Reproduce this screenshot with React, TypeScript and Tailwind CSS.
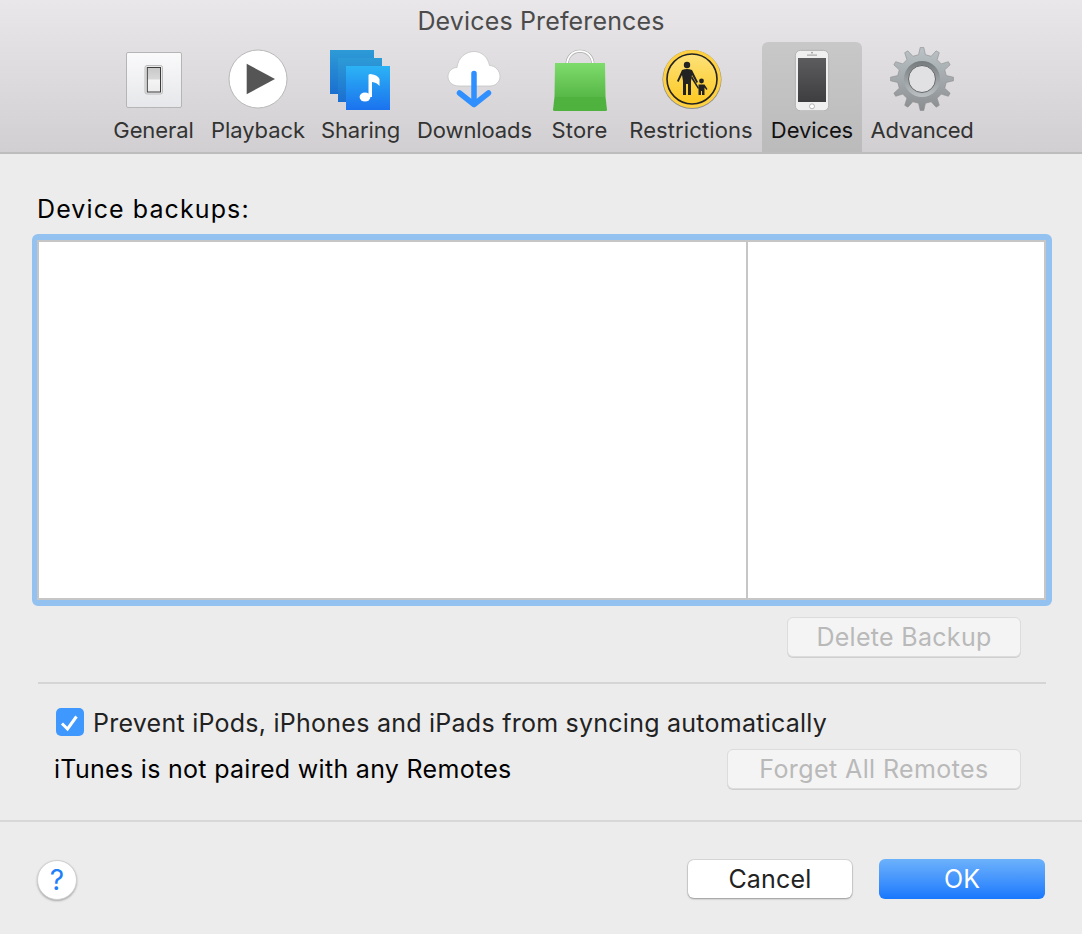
import React from "react";

const gearPath = (() => {
  const cx = 32, cy = 32, n = 12, ro = 31.5, ri = 24.5;
  const pts: string[] = [];
  for (let i = 0; i < n; i++) {
    const a = (i * 2 * Math.PI) / n - Math.PI / 2;
    const step = (2 * Math.PI) / n;
    const p = (r: number, t: number) => `${(cx + r * Math.cos(t)).toFixed(2)} ${(cy + r * Math.sin(t)).toFixed(2)}`;
    pts.push(`${i === 0 ? "M" : "L"}${p(ri, a - step * 0.27)}`);
    pts.push(`L${p(ro, a - step * 0.11)}`);
    pts.push(`L${p(ro, a + step * 0.11)}`);
    pts.push(`L${p(ri, a + step * 0.27)}`);
  }
  return pts.join(" ") + " Z";
})();

function Icon({ children }: { children: React.ReactNode }) {
  return (
    <svg width="64" height="64" viewBox="0 0 64 64" className="block">
      {children}
    </svg>
  );
}

const GeneralIcon = () => (
  <Icon>
    <defs>
      <linearGradient id="g1" x1="0" y1="0" x2="0" y2="1">
        <stop offset="0" stopColor="#fafafb" />
        <stop offset="1" stopColor="#e6e7ea" />
      </linearGradient>
      <linearGradient id="g2" x1="0" y1="0" x2="0" y2="1">
        <stop offset="0" stopColor="#c8c8c8" />
        <stop offset="0.48" stopColor="#d8d8d8" />
        <stop offset="0.5" stopColor="#f4f4f4" />
        <stop offset="1" stopColor="#ececec" />
      </linearGradient>
    </defs>
    <g transform="translate(-0.5 0)">
      <rect x="5" y="5.5" width="55" height="55" rx="1.5" fill="url(#g1)" stroke="#b5b5b7" />
      <rect x="23.5" y="18.5" width="17.5" height="28.5" rx="2" fill="#e9e9e9" stroke="#bcbcbc" />
      <rect x="25.8" y="20.5" width="13.2" height="24.5" fill="url(#g2)" stroke="#3c3c3c" strokeWidth="1" />
    </g>
  </Icon>
);

const PlaybackIcon = () => (
  <Icon>
    <circle cx="32" cy="32" r="29" fill="#fff" stroke="#b9b9b9" strokeWidth="1" />
    <path d="M20.7 16.7 L49 32 L20.7 47.3 Z" fill="#555" />
  </Icon>
);

const SharingIcon = () => (
  <Icon>
    <defs>
      <linearGradient id="s1" x1="0" y1="0" x2="0" y2="1">
        <stop offset="0" stopColor="#2d9bd6" />
        <stop offset="1" stopColor="#1b6fd0" />
      </linearGradient>
      <linearGradient id="s3" x1="0" y1="0" x2="0" y2="1">
        <stop offset="0" stopColor="#2cb3f5" />
        <stop offset="1" stopColor="#1b72ee" />
      </linearGradient>
    </defs>
    <g transform="translate(-1 0)">
      <rect x="2" y="3" width="44" height="44" fill="url(#s1)" />
      <rect x="10" y="11" width="44" height="44" fill="url(#s1)" />
      <rect x="18" y="19" width="44" height="44" fill="url(#s3)" />
      <ellipse cx="37" cy="50" rx="5.4" ry="4.6" fill="#fff" />
      <path d="M40.5 50 L40.5 28 Q41 27 42.5 27 Q50 28 51.5 32 L51.5 39 Q49 35.5 44 35 L44 50 Z" fill="#fff" />
    </g>
  </Icon>
);

const DownloadsIcon = () => (
  <Icon>
    <g transform="translate(-1 -0.5)">
      <path
        d="M17 39.5 C9 39.5 6 34 6 30 C6 25 10 21 15 21 C16 11 24 5 32 5 C40 5 46 11 47.5 19 C53 19 58 24 58 30 C58 35 54 39.5 48 39.5 Z"
        fill="#fff"
        stroke="#c4c4c4"
        strokeWidth="0.8"
      />
      <path d="M32 27 L32 57 M17.5 46.5 L32 58 L46.5 46.5" fill="none" stroke="#2f8fff" strokeWidth="5.5" strokeLinecap="round" strokeLinejoin="round" />
    </g>
  </Icon>
);

const StoreIcon = () => (
  <Icon>
    <defs>
      <linearGradient id="b1" x1="0" y1="0" x2="0" y2="1">
        <stop offset="0" stopColor="#7edc6c" />
        <stop offset="1" stopColor="#57b747" />
      </linearGradient>
    </defs>
    <g transform="translate(-0.5 0)">
      <path d="M19.5 18 C19.5 -0.5 45.5 -0.5 45.5 18" fill="none" stroke="#a9a9a9" strokeWidth="3" />
      <path d="M19.5 18 C19.5 -0.5 45.5 -0.5 45.5 18" fill="none" stroke="#fff" strokeWidth="1.8" />
      <path d="M7.5 16 L57.5 16 L58 50 L7 50 Z" fill="url(#b1)" />
      <path d="M7 50 L58 50 L59.5 62.5 Q59.5 64 58 64 L7 64 Q5.5 64 5.5 62.5 Z" fill="#4fb23e" />
    </g>
  </Icon>
);

const RestrictionsIcon = () => (
  <Icon>
    <defs>
      <linearGradient id="y1" x1="0" y1="0" x2="0" y2="1">
        <stop offset="0" stopColor="#fde179" />
        <stop offset="1" stopColor="#fdc921" />
      </linearGradient>
    </defs>
    <circle cx="33" cy="32.5" r="29.5" fill="#8c8c8c" />
    <circle cx="33" cy="32" r="29" fill="#ffd040" />
    <circle cx="33" cy="32" r="25" fill="url(#y1)" stroke="#222" strokeWidth="1.6" />
    <g transform="translate(2 1)">
      <circle cx="26" cy="17" r="3.2" fill="#222" />
      <path d="M21 22 Q26 20 31 22 L37 34 L35.5 35 L31 27 L30 33 L30 47 L27 47 L27 36 L25 36 L25 47 L22 47 L22 33 L21 27 L17.5 34 L16 33 Z" fill="#222" />
      <path d="M31 28 L38 40 L37 41 L30 30 Z" fill="#222" />
      <circle cx="40.5" cy="33" r="2.4" fill="#222" />
      <path d="M37.5 36.5 L43.5 36.5 L46.5 41 L45.5 42 L43.5 39.5 L43.5 47 L41 47 L41 43 L40 43 L40 47 L37.5 47 Z" fill="#222" />
    </g>
  </Icon>
);

const DevicesIcon = () => (
  <Icon>
    <defs>
      <linearGradient id="p1" x1="0" y1="0" x2="0" y2="1">
        <stop offset="0" stopColor="#5c5c5e" />
        <stop offset="1" stopColor="#3e3e40" />
      </linearGradient>
    </defs>
    <rect x="15.4" y="3.4" width="33.2" height="60.4" rx="5" fill="#efefef" stroke="#a9a9a9" strokeWidth="0.8" />
    <rect x="18" y="11" width="28" height="44" fill="url(#p1)" />
    <rect x="27" y="7.6" width="10" height="1" fill="#9a9a9a" />
    <circle cx="32" cy="5.7" r="0.9" fill="#9a9a9a" />
    <circle cx="32" cy="59.3" r="2.5" fill="#fff" stroke="#a5a5a5" strokeWidth="0.8" />
  </Icon>
);

const AdvancedIcon = () => (
  <Icon>
    <defs>
      <linearGradient id="a1" x1="0" y1="0" x2="0" y2="1">
        <stop offset="0" stopColor="#bac3c7" />
        <stop offset="1" stopColor="#8b8e91" />
      </linearGradient>
      <linearGradient id="a2" x1="0" y1="0" x2="0" y2="1">
        <stop offset="0" stopColor="#757a7d" />
        <stop offset="1" stopColor="#bcc1c4" />
      </linearGradient>
    </defs>
    <path d={gearPath} fill="url(#a1)" stroke="#8c8c8c" strokeWidth="0.6" strokeLinejoin="round" />
    <circle cx="32" cy="32" r="18" fill="url(#a2)" />
    <circle cx="32" cy="32" r="13.5" fill="#e1e0e2" stroke="#64686a" strokeWidth="1" />
  </Icon>
);

const tabs = [
  { label: "General", icon: <GeneralIcon />, cls: "w-[103px]" },
  { label: "Playback", icon: <PlaybackIcon />, cls: "w-[106px]" },
  { label: "Sharing", icon: <SharingIcon />, cls: "w-[99px]" },
  { label: "Downloads", icon: <DownloadsIcon />, cls: "w-[129px]" },
  { label: "Store", icon: <StoreIcon />, cls: "w-[81px] tracking-[0.2px]" },
  { label: "Restrictions", icon: <RestrictionsIcon />, cls: "w-[142px] tracking-[0.1px]" },
  { label: "Devices", icon: <DevicesIcon />, cls: "w-[100px]" },
  { label: "Advanced", icon: <AdvancedIcon />, cls: "w-[120px] tracking-[-0.3px]" },
];

export default function App() {
  return (
    <div className="w-[1082px] h-[934px] flex flex-col bg-[#ececec] overflow-hidden font-['Inter','Liberation_Sans',sans-serif] text-[25px] tracking-[0.25px] text-[#1c1c1c]">
      <header className="h-[154px] shrink-0 flex flex-col bg-gradient-to-b from-[#e9e7e9] to-[#d1cfd1] border-b-2 border-[#bdbdbd]">
        <h1 className="h-[42px] flex items-center justify-center text-[#4b4b4b] font-normal leading-none tracking-[0.15px]">Devices Preferences</h1>
        <nav className="flex justify-center pl-[2px] text-[22px] tracking-[-0.1px]">
          {tabs.map((t) => (
            <div
              key={t.label}
              className={`${t.cls} h-[110px] flex flex-col items-center rounded-t-[6px] ${t.label === "Devices" ? "bg-gradient-to-b from-[#c9c8c9] to-[#bcbbbc] text-[#111]" : "text-[#333]"}`}
            >
              <div className="mt-[5px] h-[64px]">{t.icon}</div>
              <span className="mt-[5px] leading-[28px] whitespace-nowrap">{t.label}</span>
            </div>
          ))}
        </nav>
      </header>

      <main className="flex-1 flex flex-col px-[32px] text-black">
        <div className="mt-[41px] pl-[5px] leading-[28px] tracking-[1.1px]">Device backups:</div>
        <div className="mt-[11px] h-[372px] w-[1020px] rounded-[6px] border-[6px] border-l-[5px] border-[#93c2f1]">
          <div className="h-full flex border-2 border-[#c6c6c6] bg-white">
            <div className="w-[709px] h-full border-r-2 border-[#c6c6c6]" />
            <div className="flex-1" />
          </div>
        </div>
        <div className="mt-[11px] flex justify-end pr-[29px]">
          <button className="w-[234px] h-[40px] rounded-[6px] bg-[#f4f4f4] border border-[#dcdcdc] text-[#b9b9b9] shadow-[0_1px_0_#cfcfcf] leading-none tracking-[0.3px]">
            Delete Backup
          </button>
        </div>
        <div className="mt-[25px] ml-[6px] mr-[4px] h-[2px] bg-[#d5d5d5]" />
        <div className="mt-[24px] ml-[24px] flex items-center gap-[9px] text-[#222]">
          <div className="w-[28px] h-[28px] rounded-[5px] bg-[#3f98fd]">
            <svg width="28" height="28" viewBox="0 0 28 28" className="block">
              <path d="M6 15.5 L11.5 21 L20.5 8.5" fill="none" stroke="#fff" strokeWidth="3" />
            </svg>
          </div>
          <span className="leading-[30px] h-[28px]">Prevent iPods, iPhones and iPads from syncing automatically</span>
        </div>
        <div className="mt-[13px] ml-[22px] flex items-center justify-between pr-[29px]">
          <span className="leading-[28px] tracking-[0.3px]">iTunes is not paired with any Remotes</span>
          <button className="w-[294px] h-[40px] rounded-[6px] bg-[#f4f4f4] border border-[#dcdcdc] text-[#b9b9b9] shadow-[0_1px_0_#cfcfcf] leading-none tracking-[0.4px]">
            Forget All Remotes
          </button>
        </div>
      </main>

      <footer className="h-[114px] shrink-0 border-t-2 border-[#d7d7d7] flex items-center px-[37px] pb-[4px] pt-[6px] text-black">
        <div className="mt-[2px] w-[40px] h-[40px] rounded-full bg-white border border-[#d0d0d0] shadow-[0_1px_2px_#a8a8a8] flex items-center justify-center text-[#1f7ffb] text-[28px] leading-none">
          ?
        </div>
        <div className="ml-auto flex items-center gap-[27px]">
          <button className="w-[164px] h-[38px] rounded-[6px] bg-white shadow-[0_1px_2px_#9a9a9a,0_0_0_1px_#d8d8d8] text-[#222] leading-none tracking-[0.2px]">
            Cancel
          </button>
          <button className="w-[166px] h-[40px] rounded-[6px] bg-gradient-to-b from-[#6cb1fb] to-[#1677fd] text-white leading-none tracking-normal">
            OK
          </button>
        </div>
      </footer>
    </div>
  );
}
